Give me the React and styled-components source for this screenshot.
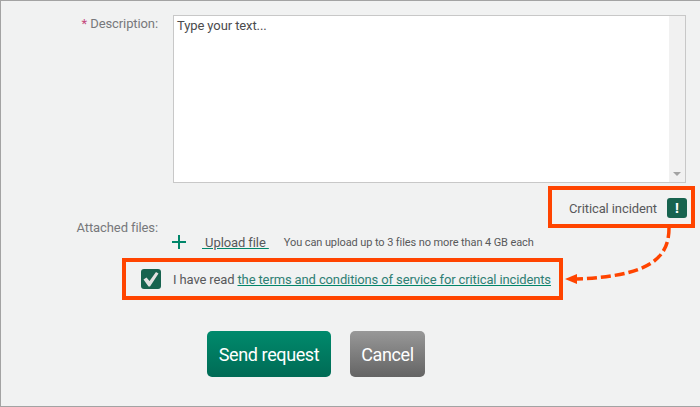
import React from 'react';
import styled, { createGlobalStyle } from 'styled-components';

const GlobalStyle = createGlobalStyle`
    html, body {
        margin: 0;
        padding: 0;
        background: #f1f2f2;
        font-family: Roboto, "Liberation Sans", sans-serif;
    }
`;

const Page = styled.div`
    position: relative;
    box-sizing: border-box;
    width: 700px;
    height: 407px;
    padding: 14px 0 0 0;
    background: #f1f2f2;
    border: 1px solid #a3a3a3;
    border-right: 0;
    display: flex;
    flex-direction: column;
    overflow: hidden;
`;

const FieldRow = styled.div`
    display: flex;
    align-items: flex-start;
`;

const Label = styled.div`
    width: 157px;
    flex: none;
    text-align: right;
    font-size: 13px;
    letter-spacing: -0.1px;
    line-height: 18px;
    color: #77787b;
`;

const Required = styled.span`
    color: #c4497d;
`;

const TextBox = styled.div`
    box-sizing: border-box;
    margin-left: 15px;
    width: 513px;
    height: 168px;
    background: #fff;
    border: 1px solid #c8c8c8;
    display: flex;
    justify-content: space-between;
`;

const Placeholder = styled.div`
    padding: 2px 3px;
    font-size: 13px;
    letter-spacing: -0.1px;
    line-height: 16px;
    color: #4b4b4d;
`;

const ScrollTrack = styled.div`
    width: 16px;
    background: #f1f1f1;
    display: flex;
    flex-direction: column;
    justify-content: flex-end;
    align-items: center;
    padding-bottom: 6px;
    box-sizing: border-box;
`;

const ScrollArrow = styled.div`
    width: 0;
    height: 0;
    border-left: 4px solid transparent;
    border-right: 4px solid transparent;
    border-top: 4px solid #a3a3a3;
`;

const CriticalRow = styled.div`
    display: flex;
    justify-content: flex-end;
    margin: 3px 5px 0 0;
`;

const Callout = styled.div`
    box-sizing: border-box;
    border: 4px solid #ff4400;
    display: flex;
    align-items: center;
`;

const CriticalBox = styled(Callout)`
    width: 147px;
    height: 42px;
    padding: 2px 4px 0 17px;
    justify-content: space-between;
`;

const CriticalLabel = styled.span`
    font-size: 13px;
    letter-spacing: -0.1px;
    color: #58595b;
`;

const Badge = styled.div`
    box-sizing: border-box;
    width: 20px;
    height: 20px;
    border-radius: 3px;
    background: #17634f;
    color: #fff;
    font: bold 15px/20px "Liberation Sans", sans-serif;
    display: flex;
    align-items: center;
    justify-content: center;
`;

const UploadRow = styled.div`
    display: flex;
    align-items: flex-start;
    margin-top: -9px;
`;

const UploadControls = styled.div`
    display: flex;
    align-items: center;
    margin: 14px 0 0 14px;
    height: 18px;
`;

const UploadLink = styled.a`
    margin-left: 16px;
    font-size: 13px;
    letter-spacing: -0.1px;
    color: #58595b;
    text-decoration: underline;
    text-decoration-color: #00866a;
`;

const UploadHint = styled.span`
    margin-left: 15px;
    font-size: 11px;
    letter-spacing: -0.1px;
    color: #58595b;
`;

const TermsBox = styled(Callout)`
    width: 441px;
    height: 42px;
    margin: 7px 0 0 121px;
    padding-left: 15px;
`;

const CheckMark = styled.div`
    width: 20px;
    height: 20px;
    border-radius: 3px;
    background: #17634f;
    display: flex;
    align-items: center;
    justify-content: center;
`;

const TermsText = styled.span`
    margin-left: 12px;
    font-size: 13px;
    letter-spacing: -0.13px;
    color: #58595b;
`;

const TermsLink = styled.a`
    color: #2f7f74;
    text-decoration: underline;
    text-decoration-color: #00866a;
`;

const Actions = styled.div`
    display: flex;
    gap: 19px;
    margin: 31px 0 0 206px;
`;

const Button = styled.button`
    height: 46px;
    width: ${(p) => p.$width}px;
    border: 0;
    border-radius: 5px;
    color: #fff;
    font: 400 18px Roboto, sans-serif;
    letter-spacing: -0.4px;
    background: ${(p) => (p.$primary ? 'linear-gradient(#008a6c, #006b55)' : 'linear-gradient(#989898, #646464)')};
    padding: 0;
`;

const Arrow = styled.svg`
    position: absolute;
    left: 559px;
    top: 227px;
`;

const App = () => (
    <Page>
        <GlobalStyle />
        <FieldRow>
            <Label>
                <Required>*</Required> Description:
            </Label>
            <TextBox>
                <Placeholder>Type your text...</Placeholder>
                <ScrollTrack>
                    <ScrollArrow />
                </ScrollTrack>
            </TextBox>
        </FieldRow>
        <CriticalRow>
            <CriticalBox>
                <CriticalLabel>Critical incident</CriticalLabel>
                <Badge>!</Badge>
            </CriticalBox>
        </CriticalRow>
        <UploadRow>
            <Label>Attached files:</Label>
            <UploadControls>
                <svg width="14" height="14" viewBox="0 0 14 14">
                    <path d="M7 0v14M0 7h14" stroke="#00866a" strokeWidth="2" fill="none" />
                </svg>
                <UploadLink>&nbsp;Upload file&nbsp;</UploadLink>
                <UploadHint>You can upload up to 3 files no more than 4 GB each</UploadHint>
            </UploadControls>
        </UploadRow>
        <TermsBox>
            <CheckMark>
                <svg width="18" height="18" viewBox="0 0 18 18">
                    <path d="M1.5 9.5l3-2 3 3.5 6.5-9 2.5 1.5-8.5 13h-1.5z" fill="#e2e2e2" />
                </svg>
            </CheckMark>
            <TermsText>
                I have read <TermsLink>the terms and conditions of service for critical incidents</TermsLink>
            </TermsText>
        </TermsBox>
        <Actions>
            <Button $primary $width={124}>
                Send request
            </Button>
            <Button $width={75}>Cancel</Button>
        </Actions>
        <Arrow width="120" height="70" viewBox="0 0 120 70">
            <path
                d="M109 0C109 30 90 48 17 51"
                fill="none"
                stroke="#ff4400"
                strokeWidth="3.5"
                strokeDasharray="10 4"
            />
            <path d="M5 51l12-5v10z" fill="#ff4400" />
        </Arrow>
    </Page>
);

export default App;
